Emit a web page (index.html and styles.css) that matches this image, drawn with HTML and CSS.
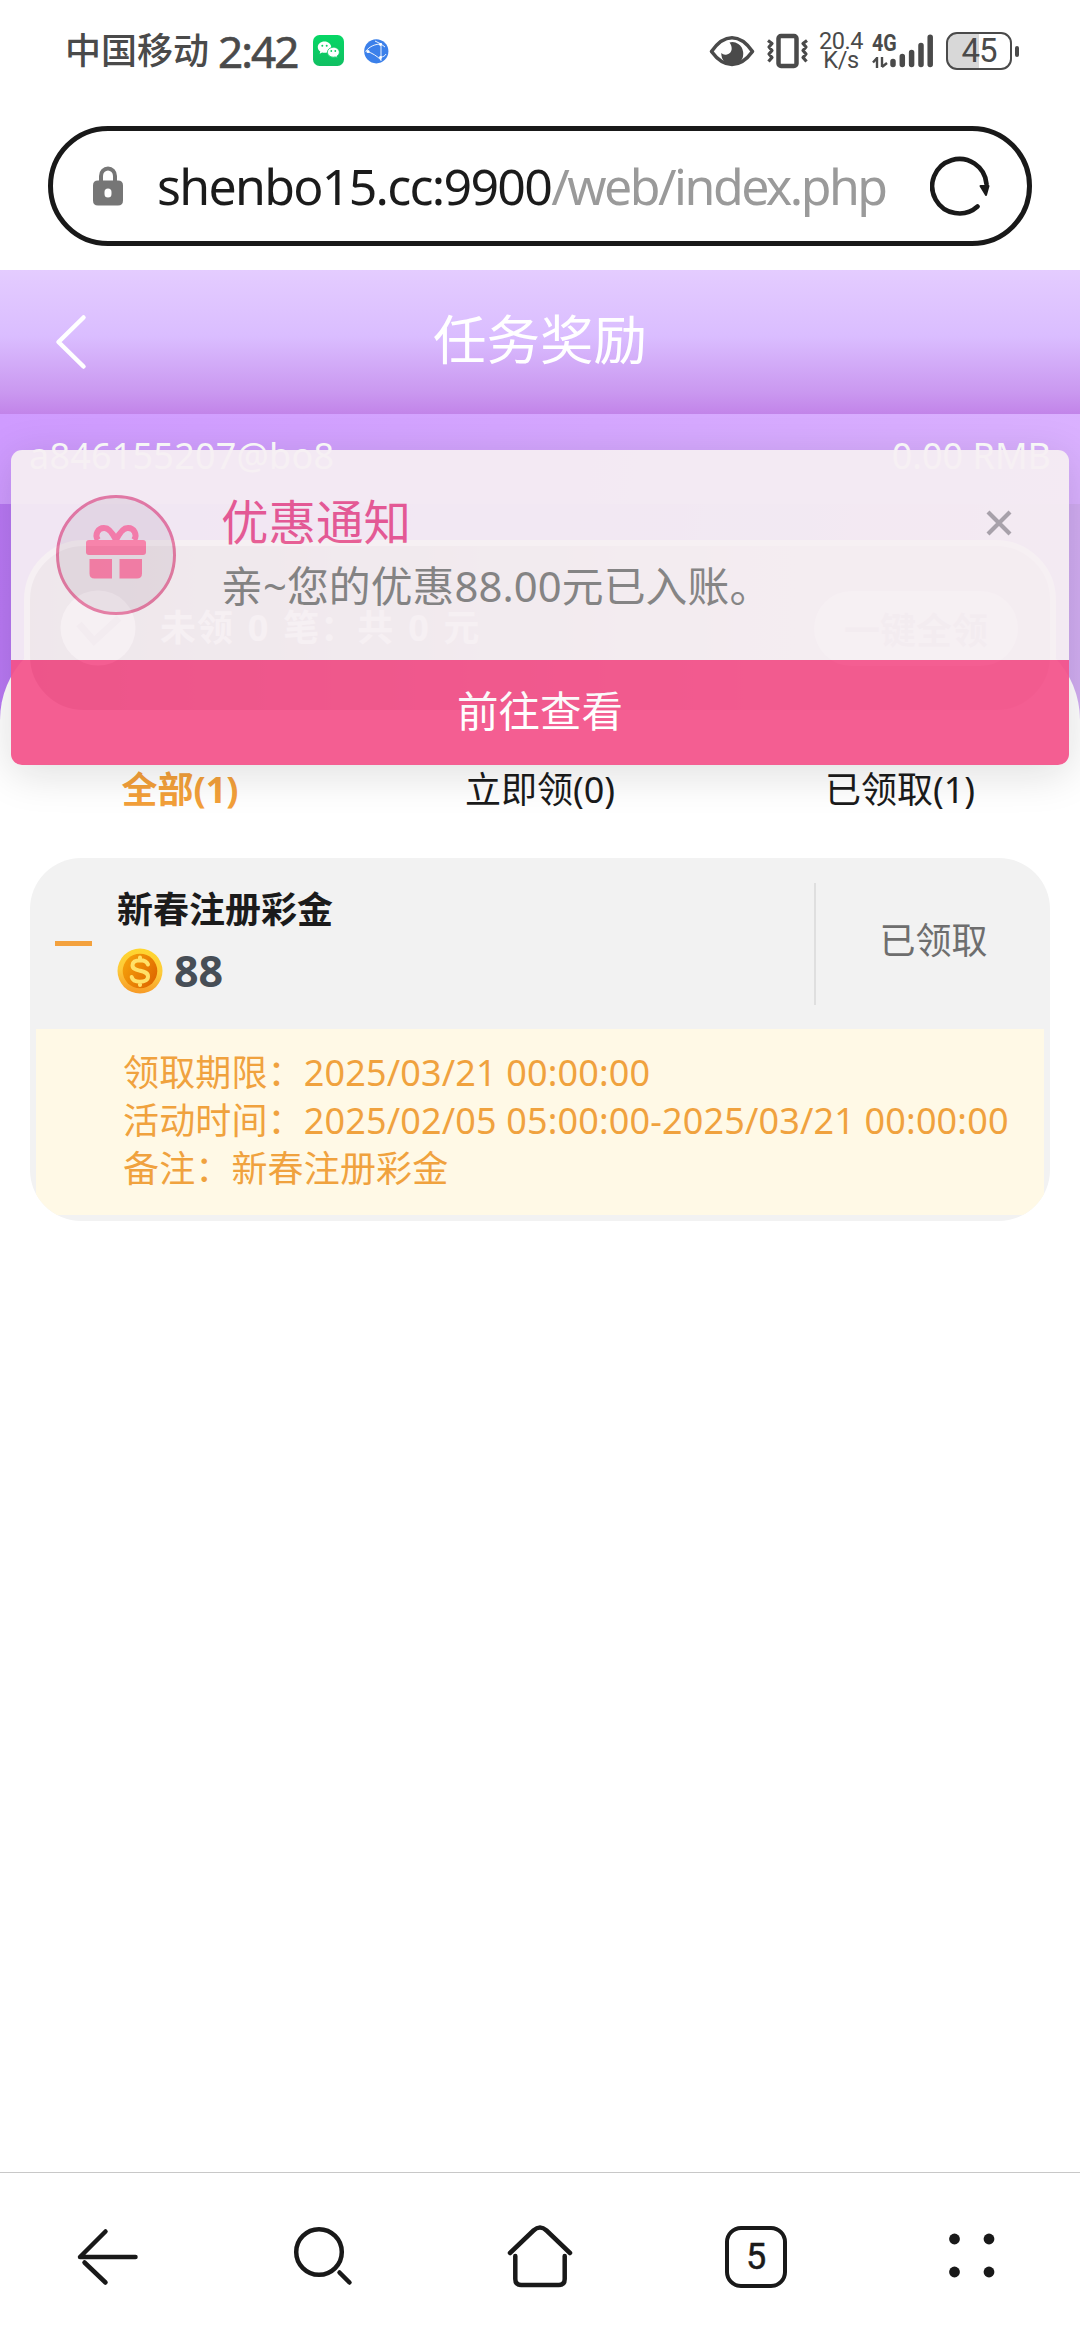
FILE: index.html
```html
<!DOCTYPE html>
<html lang="zh-CN">
<head>
<meta charset="utf-8">
<title>任务奖励</title>
<link rel="stylesheet" href="styles.css">
</head>
<body>
<div class="screen">
  <header class="status">
    <div class="status-left">
      <span class="carrier">中国移动</span>
      <span class="clock">2:42</span>
      <svg class="wechat" width="32" height="32" viewBox="0 0 32 32">
        <defs><linearGradient id="wx" x1="0" y1="0" x2="0" y2="1"><stop offset="0" stop-color="#06d765"/><stop offset="1" stop-color="#10bf62"/></linearGradient></defs>
        <rect width="31" height="31" rx="6.5" fill="url(#wx)"/>
        <path d="M11.5 6.500C7.500 6.500 4.800 9 4.800 12.200c0 1.900 1 3.400 2.500 4.400l-.6 2.100 2.400-1.300c.8.2 1.600.4 2.400.4 3.700 0 6.700-2.500 6.700-5.600S15.200 6.500 11.500 6.500z" fill="#fff"/>
        <path d="M20.300 12.300c-3.300 0-5.900 2.200-5.900 4.900s2.600 5 5.900 5c.7 0 1.400-.1 2-.3l2.100 1.200-.5-1.900c1.400-.9 2.400-2.400 2.400-4 0-2.700-2.700-4.900-6-4.900z" fill="#fff" stroke="#0ccd64" stroke-width=".8"/>
        <g fill="#0ccd64"><circle cx="9.300" cy="10.800" r="1"/><circle cx="13.700" cy="10.800" r="1"/><circle cx="18.300" cy="16" r=".9"/><circle cx="22.300" cy="16" r=".9"/></g>
      </svg>
      <svg class="globe" width="25" height="25" viewBox="0 0 25 25">
        <circle cx="12.300" cy="12.300" r="12.100" fill="#3b80ea"/>
        <g fill="none" stroke="#fff" stroke-width=".9"><path d="M1.500 12.500C6 7 11 5 18 5M3.500 12.500C8 14 13 17 17 21M17 4.500V22M17 18c2 0 4-1 5-3M11 2l6 3 4 3"/></g>
        <g fill="#fff"><circle cx="4" cy="12.500" r="1.600"/><circle cx="16.500" cy="5.500" r="1.400"/><circle cx="16.500" cy="18.500" r="1.400"/></g>
      </svg>
    </div>
    <div class="status-right">
      <svg width="46" height="36" viewBox="0 0 46 36">
        <path d="M2.500 18.500Q12 4.800 23 4.800T43.500 18.500Q34 31.500 23 31.500T2.500 18.500z" fill="none" stroke="#4a4a4a" stroke-width="3.600" stroke-linejoin="round"/>
        <path d="M20.500 9.500A11 11.500 0 1 1 12.300 20Q14.500 22.500 18 21.500C23.500 20 24 14 20.500 9.500z" fill="#4a4a4a"/>
      </svg>
      <svg class="vibrate" width="43" height="36" viewBox="0 0 43 36">
        <rect x="12.500" y="3" width="18" height="30" rx="2.500" fill="none" stroke="#4a4a4a" stroke-width="4.500"/>
        <path d="M2 7.500l4 3-3 3.500 3 3.500-3 3.500 3 3.500-3.500 4M41 7.500l-4 3 3 3.500-3 3.500 3 3.500-3 3.500 3.500 4" fill="none" stroke="#4a4a4a" stroke-width="3.200" stroke-linejoin="round"/>
      </svg>
      <div class="speed"><span>20.4</span><span>K/s</span></div>
      <div class="network">
        <div class="gen"><span>4G</span>
          <svg width="17" height="11" viewBox="0 0 17 11"><path d="M5 11V1L1 5.500M10 0v10M10 10l5-4" fill="none" stroke="#4a4a4a" stroke-width="2.400"/></svg>
        </div>
        <svg width="45" height="34" viewBox="0 0 45 34"><g stroke="#4a4a4a" stroke-width="5.500" stroke-linecap="round"><path d="M4 27.500v3M13.300 22.500v8M22.600 18.500v12M32 11.500v19M41.200 3.300v27.200"/></g></svg>
      </div>
      <div class="battery"><span>45</span></div>
      <i class="nub"></i>
    </div>
  </header>

  <div class="address">
    <svg width="30" height="40" viewBox="0 0 30 40"><path d="M8 16V10a7 7.500 0 0 1 14 0v6" fill="none" stroke="#767676" stroke-width="4"/><path fill-rule="evenodd" d="M5 14.500h20q5 0 5 5v15q0 5-5 5H5q-5 0-5-5v-15q0-5 5-5zM15 22.500a3.500 3.500 0 0 0-3.500 3.500v2a3.500 3.500 0 0 0 7 0v-2a3.500 3.500 0 0 0-3.500-3.500z" fill="#767676"/></svg>
    <div class="url">shenbo15.cc:9900<span>/web/index.php</span></div>
    <svg width="60" height="62" viewBox="0 0 60 62"><path d="M56.500 29A27.200 27.200 0 1 0 47.500 51.500" fill="none" stroke="#191919" stroke-width="4.600" stroke-linecap="round"/><path d="M50.500 31h8l-2.500 9z" fill="#191919" stroke="#191919" stroke-width="2" stroke-linejoin="round"/></svg>
  </div>

  <div class="titlebar">
    <svg width="32" height="56" viewBox="0 0 32 56"><path d="M28.500 3.500L3.500 28l25 24.500" fill="none" stroke="#fff" stroke-width="4.500" stroke-linecap="round" stroke-linejoin="round"/></svg>
    <h1>任务奖励</h1>
  </div>

  <section class="hero">
    <div class="user"><span class="account">a846155207@bo8</span><span class="balance">0.00 RMB</span></div>
    <div class="summary">
      <svg width="76" height="76" viewBox="0 0 76 76"><circle cx="38" cy="38" r="37.500" fill="#fff"/><path d="M19 34l15 17 25-23" fill="none" stroke="#cfc8cd" stroke-width="7"/></svg>
      <strong>未领 0 笔：共 0 元</strong>
      <button>一键全领</button>
    </div>
  </section>

  <main class="panel">
    <nav class="tabs"><span class="active">全部(1)</span><span>立即领(0)</span><span>已领取(1)</span></nav>
    <article class="card">
      <div class="card-head">
        <i class="dash"></i>
        <div class="info">
          <h2>新春注册彩金</h2>
          <div class="amount">
            <svg width="46" height="46" viewBox="0 0 46 46">
              <defs><linearGradient id="rim" x1="0.600" y1="0" x2="0.500" y2="1"><stop offset="0" stop-color="#ffd62e"/><stop offset=".5" stop-color="#fdcb3b"/><stop offset="1" stop-color="#f79a26"/></linearGradient><linearGradient id="face" x1="0" y1="0" x2="1" y2="0.600"><stop offset="0" stop-color="#f8a80c"/><stop offset="1" stop-color="#e06a00"/></linearGradient></defs>
              <circle cx="23" cy="23" r="22.500" fill="url(#rim)"/><circle cx="23" cy="23" r="17.300" fill="url(#face)"/>
              <path d="M31 16.500c-1-3-4-4.300-8-4.300-4.500 0-7.500 1.900-7.500 5 0 3.800 3.500 4.500 7.500 5.500s8 1.900 8 5.700c0 3.300-3.300 5.300-8 5.300-4.300 0-7.500-1.500-8.300-4.700M23 9.500v3M23 34v3" fill="none" stroke="#ffe169" stroke-width="4" stroke-linecap="round"/>
            </svg>
            <b>88</b>
          </div>
        </div>
        <div class="state">已领取</div>
      </div>
      <div class="details">
        <p>领取期限：2025/03/21 00:00:00</p>
        <p>活动时间：2025/02/05 05:00:00-2025/03/21 00:00:00</p>
        <p>备注：新春注册彩金</p>
      </div>
    </article>
  </main>

  <footer class="toolbar">
    <svg width="64" height="64" viewBox="0 0 64 64"><path d="M59.500 32H4L29.500 6.500" /><path d="M29.500 57.500L8.500 37.500"/></svg>
    <svg width="64" height="64" viewBox="0 0 64 64"><circle cx="27" cy="27" r="22.800"/><path d="M47.500 47.500l10 10"/></svg>
    <svg width="66" height="64" viewBox="0 0 66 64"><path d="M3 28L26.500 5.500Q33 -.5 39.500 5.500L63 28"/><path d="M8.300 31V54Q8.300 60 14.300 60H51.700Q57.700 60 57.700 54V31"/></svg>
    <div class="tabcount">5</div>
    <svg width="64" height="64" viewBox="0 0 64 64"><g class="dots"><circle cx="14.500" cy="14" r="5.400"/><circle cx="49" cy="14" r="5.400"/><circle cx="14.500" cy="47" r="5.400"/><circle cx="49" cy="47" r="5.400"/></g></svg>
  </footer>

  <aside class="notice">
    <div class="notice-body">
      <div class="gift">
        <svg width="60" height="56" viewBox="0 0 60 56"><g fill="#f77ba5"><rect y="16" width="60" height="15" rx="3"/><path d="M3.500 35H26V54.500H8.500q-5 0-5-5zM33.500 35H56V49.500q0 5-5 5H33.500z"/></g><path d="M30 16Q24 4 18.500 4A7.500 7.500 0 0 0 12 16M30 16Q36 4 41.500 4A7.500 7.500 0 0 1 48 16" fill="none" stroke="#f77ba5" stroke-width="6"/></svg>
      </div>
      <div class="message"><h3>优惠通知</h3><p>亲~您的优惠88.00元已入账。</p></div>
      <svg class="close" width="26" height="26" viewBox="0 0 26 26"><path d="M2 2l22 22M24 2L2 24" stroke="#a5a1a5" stroke-width="4.200"/></svg>
    </div>
    <div class="notice-action">前往查看</div>
  </aside>
</div>
</body>
</html>
```

FILE: styles.css
```css
* { box-sizing: border-box; margin: 0; padding: 0; }
body { background: #fff; color: #1b1b1b; font-family: "Noto Sans", "Noto Sans CJK SC", sans-serif; }
svg { display: block; flex: none; }
.screen { position: relative; display: flex; flex-direction: column; width: 1080px; height: 2340px; overflow: hidden; background: #fff; }

/* phone status bar */
.status { display: flex; justify-content: space-between; height: 102px; padding: 0 61px 0 65px; color: #4a4a4a; }
.status-left, .status-right { display: flex; align-items: center; }
.carrier { width: 153px; font-size: 36px; line-height: 48px; font-weight: 500; }
.clock { width: 95px; font-size: 44px; line-height: 48px; letter-spacing: -2px; -webkit-text-stroke: .6px #4a4a4a; }
.globe { margin-left: 19px; }
.vibrate { margin-left: 11px; }
.speed { display: flex; flex-direction: column; align-items: center; width: 42px; margin-left: 11px; font: 23.500px/19px Roboto, sans-serif; letter-spacing: -.4px; }
.network { display: flex; align-items: flex-end; width: 62px; height: 34px; margin-left: 10px; }
.gen { display: flex; flex-direction: column; justify-content: space-between; width: 17px; height: 34px; font: bold 24px/18px Roboto, sans-serif; white-space: nowrap; }
.gen span { transform: scaleX(.82); transform-origin: left; }
.battery { width: 66px; height: 38px; margin-left: 12px; border: 2.500px solid #4a4a4a; border-radius: 11px; background: linear-gradient(90deg, #d8d8d8 50%, #fff 50%); font: 33px/34px Roboto, sans-serif; text-align: center; letter-spacing: -1px; }
.nub { width: 4px; height: 11px; margin-left: 3px; border-radius: 2px; background: #4a4a4a; }

/* browser address bar */
.address { display: flex; align-items: center; height: 120px; margin: 24px 48px; padding: 0 36px 0 40px; border: 5px solid #191919; border-radius: 60px; flex: none; }
.url { flex: none; width: 732px; margin: 0 41px 0 34px; overflow: hidden; font-size: 50px; line-height: 68px; letter-spacing: -1.700px; white-space: nowrap; }
.url span { color: #9a9a9a; letter-spacing: -2.500px; }

.titlebar { display: grid; grid-template-columns: 100px 1fr 100px; align-items: center; flex: none; height: 144px; padding-left: 55px; padding-right: 55px; background: linear-gradient(#e4ccff, #dabdff 46%, #ca98f0 85%, #c284e9); color: #fff; }
.titlebar h1 { font-size: 53.500px; line-height: 72px; padding-bottom: 5px; font-weight: 400; text-align: center; }

.hero { flex: none; height: 306px; background: linear-gradient(100deg, #b877f4, #d2aef2); }
.user { display: flex; justify-content: space-between; height: 90px; padding: 18px 29px; background: linear-gradient(100deg, #cf9bff, #dab1ff); color: #fff; font-size: 36px; line-height: 48px; }
.account { letter-spacing: .2px; }
.summary { position: relative; display: flex; align-items: center; width: 1032px; height: 176px; margin: 36px 24px 0; padding: 0 32px 0 30px; border: 6px solid #fff; border-radius: 60px; background: linear-gradient(90deg, #95898f, #ddd2d8 70%, #e5d8de); color: #fff; }
.summary strong { margin-left: 24px; font-size: 36px; line-height: 48px; letter-spacing: 1px; word-spacing: 3.500px; }
.summary button { width: 204px; height: 75px; margin-left: auto; border: 0; border-radius: 38px; background: #fff; color: #d6ccd2; font: bold 36px/48px "Noto Sans CJK SC", sans-serif; }

.panel { flex: 1; margin-top: -90px; padding: 136px 30px 0; border-radius: 90px 90px 0 0; background: #fff; }
.tabs { display: grid; grid-template-columns: repeat(3, 1fr); margin: 0 -30px; font-size: 36px; line-height: 48px; text-align: center; }
.tabs .active { color: #f3a03a; font-weight: 700; }

.card { height: 363px; margin-top: 44px; padding: 6px; border-radius: 51px; overflow: hidden; background: #f2f2f2; }
.card-head { display: flex; align-items: center; height: 159px; margin-bottom: 6px; }
.dash { width: 37px; height: 5px; margin: 0 26px 0 19px; background: #f3a13d; }
.info { width: 696px; height: 153px; padding-top: 19px; }
.info h2 { font-size: 36px; line-height: 48px; margin-left: -1px; }
.amount { display: flex; align-items: center; gap: 11px; margin: 14px 0 0 -1px; }
.amount b { color: #474e56; font: bold 43px/46px "Noto Sans", sans-serif; }
.state { flex: 1; height: 122px; margin-right: -2px; padding-left: 5px; border-left: 2px solid #dfdfdf; color: #6e6e6e; font-size: 36px; line-height: 116px; text-align: center; }
.details { height: 186px; padding: 20px 0 0 87px; background: #fff9e6; color: #f0a23e; font-size: 36px; line-height: 48px; letter-spacing: .15px; white-space: nowrap; }

/* browser bottom toolbar */
.toolbar { display: grid; grid-template-columns: repeat(5, 1fr); place-items: center; flex: none; height: 168px; border-top: 1px solid #c8c8c8; }
.toolbar svg { fill: none; stroke: #191919; stroke-width: 4.500px; stroke-linecap: round; stroke-linejoin: round; }
.toolbar .dots { fill: #191919; stroke: none; }
.tabcount { width: 62px; height: 62px; border: 4.500px solid #191919; border-radius: 16px; font: 36px/54px Roboto, sans-serif; text-align: center; -webkit-text-stroke: .5px #191919; }

/* floating notification */
.notice { position: absolute; top: 450px; left: 11px; width: 1058px; height: 315px; border-radius: 11px; overflow: hidden; opacity: .93; background: #f6eff3; box-shadow: 0 8px 44px rgba(0, 0, 0, .14); }
.notice-body { display: flex; height: 210px; padding: 45px 57px 0 45px; }
.gift { display: grid; place-items: center; width: 120px; height: 120px; padding-bottom: 6px; border: 3px solid #e2769f; border-radius: 50%; background: rgba(90, 40, 75, .09); }
.message { margin-left: 45px; flex: 1; }
.message h3 { color: #e6558e; font-size: 47.500px; font-weight: 400; line-height: 60px; margin-top: -3px; }
.message p { margin-top: 6px; color: #808080; font-size: 41.800px; line-height: 56px; letter-spacing: .1px; }
.close { margin-top: 15px; }
.notice-action { height: 105px; background: #f4528a; color: #fff; font-size: 41.500px; line-height: 103px; text-align: center; }
```
